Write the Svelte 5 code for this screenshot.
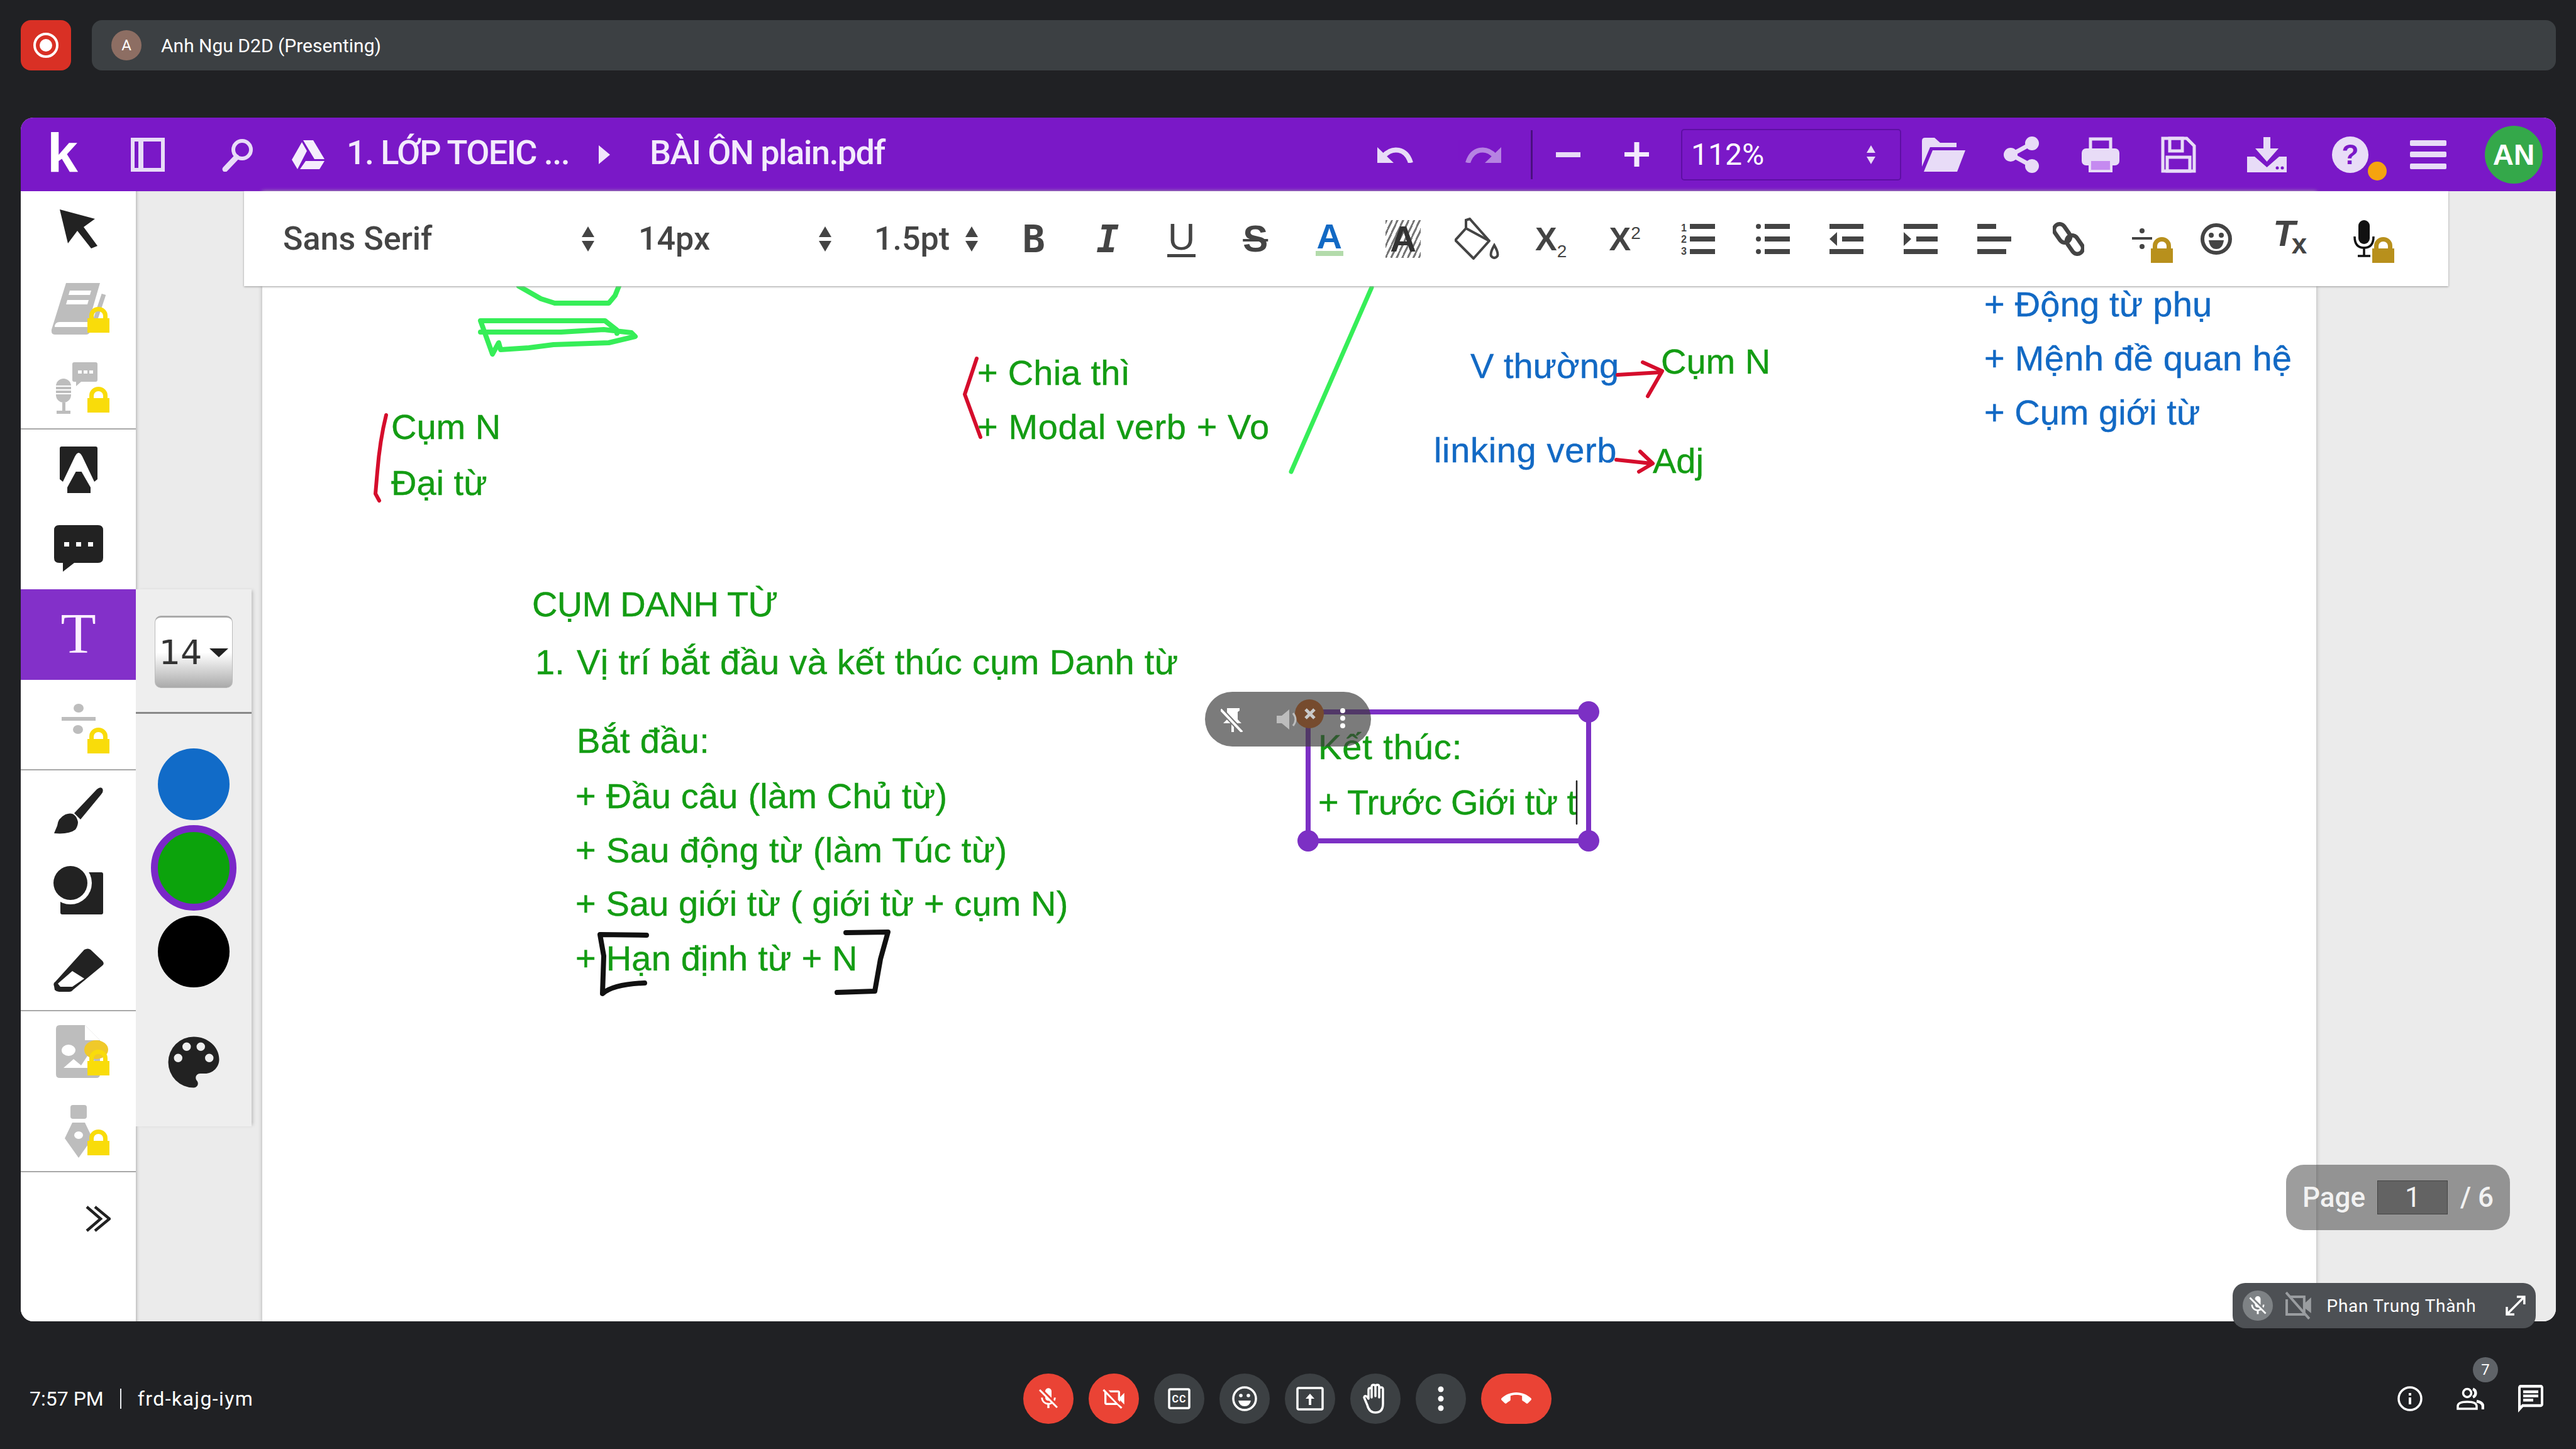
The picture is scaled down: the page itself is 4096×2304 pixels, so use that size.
<script>
  const G = '#139c13';
  const B = '#1269c4';
  const X = 417, Y = 304;
  const texts = [
    { x: 622, b: 698, t: 'Cụm N', c: G, s: 0 },
    { x: 622, b: 787, t: 'Đại từ', c: G, s: 0 },
    { x: 1554, b: 612, t: '+ Chia thì', c: G, s: 0.2 },
    { x: 1554, b: 698, t: '+ Modal verb + Vo', c: G, s: 0.6 },
    { x: 2338, b: 601, t: 'V thường', c: B, s: 0 },
    { x: 2641, b: 594, t: 'Cụm N', c: G, s: 0 },
    { x: 2280, b: 735, t: 'linking verb', c: B, s: 0.65 },
    { x: 2628, b: 752, t: 'Adj', c: G, s: 0 },
    { x: 3155, b: 503, t: '+ Động từ phụ', c: B, s: 0.2 },
    { x: 3155, b: 589, t: '+ Mệnh đề quan hệ', c: B, s: 0.3 },
    { x: 3155, b: 675, t: '+ Cụm giới từ', c: B, s: 0 },
    { x: 846, b: 980, t: 'CỤM DANH TỪ', c: G, s: -0.7 },
    { x: 851, b: 1072, t: '1.', c: G, s: 0 },
    { x: 917, b: 1072, t: 'Vị trí bắt đầu và kết thúc cụm Danh từ', c: G, s: 0.35 },
    { x: 917, b: 1197, t: 'Bắt đầu:', c: G, s: 0.3 },
    { x: 915, b: 1285, t: '+ Đầu câu (làm Chủ từ)', c: G, s: 0.2 },
    { x: 915, b: 1371, t: '+ Sau động từ (làm Túc từ)', c: G, s: 0.4 },
    { x: 915, b: 1456, t: '+ Sau giới từ ( giới từ + cụm N)', c: G, s: 0.1 },
    { x: 915, b: 1543, t: '+ Hạn định từ + N', c: G, s: 0.2 },
    { x: 2096, b: 1207, t: 'Kết thúc:', c: G, s: 0.9 },
    { x: 2096, b: 1295, t: '+ Trước Giới từ t', c: G, s: -0.6 }
  ];
  const swatches = ['blue', 'green', 'black'];
</script>

{#snippet lock(kind)}
  <svg class="lock {kind}" width="35" height="41" viewBox="0 0 35 41">
    <path d="M3 18 V14 a14.500 14 0 0 1 29 0 V18 h3 V41 H0 V18 Z M10 18 H25 V14 a7.500 7 0 0 0 -15 0 Z" />
  </svg>
{/snippet}

<div class="root">
  <header class="topbar">
    <div class="rec">
      <svg width="44" height="44" viewBox="0 0 44 44"><circle cx="22" cy="22" r="18" fill="none" stroke="#fff" stroke-width="4" /><circle cx="22" cy="22" r="10" fill="#fff" /></svg>
    </div>
    <div class="titlebar">
      <span class="ava">A</span>
      <span class="presenter">Anh Ngu D2D (Presenting)</span>
    </div>
  </header>

  <main class="panel">
    <div class="head">
      <span class="logo">k</span>
      <svg width="54" height="54" viewBox="0 0 54 54"><rect x="3" y="3" width="48" height="48" fill="none" stroke="#e8dcf7" stroke-width="6" /><rect x="12" y="3" width="8" height="48" fill="#e8dcf7" /></svg>
      <svg width="52" height="54" viewBox="0 0 52 54"><circle cx="33" cy="19" r="14" fill="none" stroke="#e8dcf7" stroke-width="6" /><path d="M24 31 L6 50" stroke="#e8dcf7" stroke-width="9" stroke-linecap="round" /></svg>
      <svg width="52" height="46" viewBox="0 0 52 46" fill="#f5eefc"><path d="M18 0 H34 L52 30 H36 Z" /><path d="M16 3 L24 17 L9 46 L0 31 Z" /><path d="M13 46 L22 33 H52 L44 46 Z" /></svg>
      <span class="crumb">1. LỚP TOEIC ...</span>
      <svg width="18" height="30" viewBox="0 0 18 30"><path d="M0 0 L18 15 L0 30 Z" fill="#f1e6fb" /></svg>
      <span class="crumb">BÀI ÔN plain.pdf</span>

      <svg width="58" height="26" viewBox="0 0 58 26"><path d="M0 1 V26 H26 Z" fill="#e8dcf7" /><path d="M10 15 C24 0 46 2 53 26" fill="none" stroke="#e8dcf7" stroke-width="8" /></svg>
      <svg class="dim" width="58" height="26" viewBox="0 0 58 26"><path d="M58 1 V26 H32 Z" fill="#e8dcf7" /><path d="M48 15 C34 0 12 2 5 26" fill="none" stroke="#e8dcf7" stroke-width="8" /></svg>
      <span class="sep"></span>
      <svg width="39" height="8" viewBox="0 0 39 8"><rect width="39" height="8" fill="#e8dcf7" /></svg>
      <svg width="39" height="39" viewBox="0 0 39 39"><path d="M0 16 H15.500 V0 H23.500 V16 H39 V23 H23.500 V39 H15.500 V23 H0 Z" fill="#f3ebfc" /></svg>
      <div class="zoombox">
        <span>112%</span>
        <svg width="16" height="30" viewBox="0 0 16 30"><path d="M8 0 L15 12 H1 Z M1 18 H15 L8 30 Z" fill="#e8dcf7" /></svg>
      </div>
      <svg width="69" height="54" viewBox="0 0 69 54" fill="#e8dcf7"><path d="M0 5 Q0 0 5 0 H20 L29 8 H55 V15 H13 L0 46 Z" /><path d="M17 20 H69 L56 54 H3 Z" /></svg>
      <svg width="56" height="58" viewBox="0 0 56 58"><path d="M45 11 L12 29 L45 47" fill="none" stroke="#e8dcf7" stroke-width="7" /><circle cx="45" cy="11" r="11" fill="#e8dcf7" /><circle cx="11" cy="29" r="11" fill="#e8dcf7" /><circle cx="45" cy="47" r="11" fill="#e8dcf7" /></svg>
      <svg width="60" height="56" viewBox="0 0 60 56"><rect x="14" y="3" width="32" height="20" fill="none" stroke="#e8dcf7" stroke-width="5" /><rect x="0" y="18" width="60" height="27" rx="7" fill="#e8dcf7" /><rect x="13" y="36" width="34" height="18" fill="#c58af0" stroke="#e8dcf7" stroke-width="4" /></svg>
      <svg width="56" height="58" viewBox="0 0 56 58"><path d="M3 3 H41 L53 15 V55 H3 Z" fill="none" stroke="#e8dcf7" stroke-width="5" /><rect x="14" y="3" width="20" height="20" fill="none" stroke="#e8dcf7" stroke-width="5" /><rect x="10" y="33" width="36" height="22" fill="none" stroke="#e8dcf7" stroke-width="5" /></svg>
      <svg width="63" height="56" viewBox="0 0 63 56"><path d="M26 0 H37 V18 H50 L31.500 39 L13 18 H26 Z" fill="#e8dcf7" /><path d="M0 31 H12 L31.500 48 L51 31 H63 V56 H0 Z" fill="#e8dcf7" /><circle cx="48" cy="49" r="2.500" fill="#7a18c7" /><circle cx="56" cy="49" r="2.500" fill="#7a18c7" /></svg>
      <div class="help">
        <svg width="58" height="58" viewBox="0 0 58 58"><circle cx="29" cy="29" r="29" fill="#e8dcf7" /><text x="29" y="44" text-anchor="middle" font-family="Liberation Sans" font-weight="700" font-size="44" fill="#7a18c7">?</text></svg>
        <span class="dot"></span>
      </div>
      <svg width="58" height="46" viewBox="0 0 58 46" fill="#e8dcf7"><rect width="58" height="9" rx="2" /><rect y="18" width="58" height="9" rx="2" /><rect y="37" width="58" height="9" rx="2" /></svg>
      <span class="me">AN</span>
    </div>

    <div class="body">
      <nav class="tools">
        <div class="grp first">
          <div class="tool"><svg width="60" height="62" viewBox="0 0 60 62"><path d="M0 0 L56 15 L38 28 L60 58 L50 62 L28 34 L13 54 Z" fill="#222" /></svg></div>
          <div class="tool">
            <svg width="88" height="82" viewBox="0 0 88 82" fill="#bdbdbd"><path d="M24 0 H78 L60 62 H14 Q6 62 6 70 H64 L62 78 Q60 82 56 82 H6 Q0 82 1 74 Z" /><path d="M30 12 H64 L62 19 H28 Z M26 27 H60 L58 34 H24 Z" fill="#fff" /><path d="M84 18 L66 72" stroke="#bdbdbd" stroke-width="7" /></svg>
            {@render lock('yl')}
          </div>
          <div class="tool">
            <svg width="76" height="84" viewBox="0 0 76 84" fill="#bdbdbd"><rect x="2" y="26" width="24" height="38" rx="12" /><path d="M2 38 H26 M2 44 H26 M2 50 H26" stroke="#fff" stroke-width="2" /><rect x="12" y="64" width="5" height="14" /><rect x="3" y="77" width="22" height="5" /><path d="M28 3 Q28 0 31 0 H65 Q68 0 68 3 V28 Q68 31 65 31 H42 L34 38 V31 H31 Q28 31 28 28 Z" /><path d="M37 13 h6 v5 h-6 z M46 13 h6 v5 h-6 z M55 13 h6 v5 h-6 z" fill="#fff" /></svg>
            {@render lock('yl')}
          </div>
        </div>
        <div class="grp noline">
          <div class="tool"><svg width="60" height="74" viewBox="0 0 60 74"><path d="M3 0 H57 Q60 0 60 3 V52 L55 56 L36 16 Q30 4 24 16 L5 56 L0 52 V3 Q0 0 3 0 Z" fill="#222" /><path d="M30 32 L49 65 V74 H12 V65 Z" fill="#222" /><path d="M24 40 H36 L30 24 Z" fill="#fff" /></svg></div>
          <div class="tool"><svg width="78" height="78" viewBox="0 0 78 78"><path d="M8 0 H70 Q78 0 78 8 V52 Q78 60 70 60 H32 L14 74 V60 H8 Q0 60 0 52 V8 Q0 0 8 0 Z" fill="#222" /><path d="M16 27 h8 v7 h-8 z M35 27 h8 v7 h-8 z M54 27 h8 v7 h-8 z" fill="#fff" /></svg></div>
        </div>
        <div class="tool active"><span class="tglyph">T</span></div>
        <div class="grp tall">
          <div class="tool">
            <svg width="56" height="76" viewBox="0 0 56 76" fill="#bdbdbd"><ellipse cx="28" cy="12" rx="8" ry="7" /><rect x="1" y="26" width="54" height="6" /><ellipse cx="27" cy="46" rx="8" ry="7" /></svg>
            {@render lock('yl')}
          </div>
        </div>
        <div class="grp">
          <div class="tool"><svg width="78" height="76" viewBox="0 0 78 76" fill="#222"><path d="M32 42 L68 4 Q74 -1 77 3 Q79 8 75 12 L42 52 Z" /><path d="M38 56 Q34 38 18 44 Q6 50 5 62 L0 74 Q24 76 34 68 Q38 62 38 56 Z" /></svg></div>
          <div class="tool"><svg width="80" height="78" viewBox="0 0 80 78"><rect x="11" y="10" width="68" height="67" rx="3" fill="#222" /><circle cx="27" cy="27" r="34" fill="#fff" /><circle cx="27" cy="27" r="27" fill="#222" /><rect x="0" y="54" width="11" height="24" fill="#fff" /></svg></div>
          <div class="tool"><svg width="82" height="70" viewBox="0 0 82 70"><path d="M50 2 Q56 -1 60 2 L79 20 Q83 25 78 28 L32 66 Q30 69 26 69 H10 Q6 69 3 66 L2 60 Q0 55 4 53 Z" fill="#222" /><path d="M31 36 L50 48 L31 61 H12 L8 56 Z" fill="#fff" /></svg></div>
        </div>
        <div class="grp">
          <div class="tool">
            <svg width="72" height="84" viewBox="0 0 72 84"><path d="M6 0 H46 L70 24 V78 Q70 84 64 84 H6 Q0 84 0 78 V6 Q0 0 6 0 Z" fill="#bdbdbd" /><path d="M46 0 L70 24 H46 Z" fill="#fff" /><ellipse cx="20" cy="40" rx="11" ry="9" fill="#fff" /><path d="M12 68 L28 54 L40 64 L52 46 L70 68 Z" fill="#fff" /></svg>
            <span class="blob"></span>
            {@render lock('yl')}
          </div>
          <div class="tool">
            <svg width="44" height="84" viewBox="0 0 44 84" fill="#bdbdbd"><rect x="9" y="0" width="26" height="22" rx="4" /><path d="M12 28 H32 L44 53 L22 84 L0 53 Z" /><ellipse cx="22" cy="48" rx="7" ry="6" fill="#fff" /></svg>
            {@render lock('yl')}
          </div>
        </div>
        <div class="tool more"><svg width="40" height="42" viewBox="0 0 40 42" fill="none" stroke="#222" stroke-width="4.500"><path d="M2 2 L24 21 L2 40" /><path d="M15 2 L38 21 L15 40" /></svg></div>
      </nav>

      <div class="gutter"></div>

      <div class="page">
        {#each texts as item}
          <span class="ink" style="left:{item.x - X}px;top:{item.b - 47 - Y}px;color:{item.c};letter-spacing:{item.s}px">{item.t}</span>
        {/each}
        <svg class="sketch" width="3266" height="1797" viewBox="417 304 3266 1797" fill="none" stroke-linecap="round" stroke-linejoin="round">
          <g stroke="#36ee58" stroke-width="8">
            <path d="M825 455 L860 475 L882 482 L968 482 L978 470 L984 455" />
            <path d="M764 510 L962 510 L981 525 L981 530 M764 528 L892 528 L960 524 L1004 529 L1010 535 L968 545 L880 548 L841 553 L796 556 L793 545 L783 563 L764 510" />
            <path d="M2181 457 L2053 750" stroke-width="7" />
          </g>
          <g stroke="#d50d2c" stroke-width="6">
            <path d="M614 660 Q604 700 600 750 L597 785 L603 796" />
            <path d="M1553 570 L1534 627 L1559 695" />
            <path d="M2572 596 L2640 592 M2612 576 L2643 590 L2620 630" />
            <path d="M2570 731 L2626 737 M2608 718 L2628 737 L2606 750" />
          </g>
          <g stroke="#111" stroke-width="8">
            <path d="M1028 1487 L954 1486 L960 1520 L958 1580 Q975 1565 1025 1563" />
            <path d="M1345 1483 L1412 1482 L1400 1525 L1391 1576 L1331 1578" />
          </g>
          <g stroke="#7c30c4" stroke-width="8"><rect x="2080" y="1132" width="446" height="205" /></g>
          <g fill="#7c30c4"><circle cx="2526" cy="1132" r="17" /><circle cx="2080" cy="1337" r="17" /><circle cx="2526" cy="1337" r="17" /><circle cx="2082" cy="1135" r="23" fill="#ee6a10" /></g>
          <path d="M2507 1242 V1310" stroke="#222" stroke-width="2.500" />
        </svg>
      </div>

      <div class="rgutter"></div>

      <div class="format">
        <span class="fsel">Sans Serif</span>
        <svg width="24" height="40" viewBox="0 0 24 40"><path d="M12 0 L22 17 H2 Z M2 23 H22 L12 40 Z" fill="#444" /></svg>
        <span class="fsel">14px</span>
        <svg width="24" height="40" viewBox="0 0 24 40"><path d="M12 0 L22 17 H2 Z M2 23 H22 L12 40 Z" fill="#444" /></svg>
        <span class="fsel">1.5pt</span>
        <svg width="24" height="40" viewBox="0 0 24 40"><path d="M12 0 L22 17 H2 Z M2 23 H22 L12 40 Z" fill="#444" /></svg>

        <span class="fi"><span class="g mono">B</span></span>
        <span class="fi"><span class="g mono it">I</span></span>
        <span class="fi"><span class="g u">U</span></span>
        <span class="fi"><span class="g s">S</span></span>
        <span class="fi"><span class="g ablue">A</span></span>
        <span class="fi"><span class="g hatch">A</span></span>
        <span class="fi"><svg width="72" height="68" viewBox="0 0 72 68" fill="none" stroke="#444" stroke-width="4"><path d="M18 17 L1 36 L30 65 L55 37 Z" stroke-linejoin="round" /><path d="M18 17 V4 L24 2 L55 37" /><path d="M63 44 Q56 56 58 61 Q63 67 68 61 Q70 56 63 44 Z" /></svg></span>
        <span class="fi"><span class="g xs">X<sub>2</sub></span></span>
        <span class="fi"><span class="g xs">X<sup>2</sup></span></span>
        <span class="fi"><svg width="56" height="54" viewBox="0 0 56 54"><path d="M14 7 H54 M14 27 H54 M14 47 H54" stroke="#444" stroke-width="8" /><text x="0" y="15" font-size="16" font-family="Liberation Sans" font-weight="700" fill="#444">1</text><text x="0" y="33" font-size="16" font-family="Liberation Sans" font-weight="700" fill="#444">2</text><text x="0" y="52" font-size="16" font-family="Liberation Sans" font-weight="700" fill="#444">3</text></svg></span>
        <span class="fi"><svg width="54" height="50" viewBox="0 0 54 50" fill="#444"><path d="M14 5 H54 M14 25 H54 M14 45 H54" stroke="#444" stroke-width="8" /><circle cx="4" cy="5" r="4" /><circle cx="4" cy="25" r="4" /><circle cx="4" cy="45" r="4" /></svg></span>
        <span class="fi"><svg width="54" height="50" viewBox="0 0 54 50" fill="#444"><path d="M0 5 H54 M20 25 H54 M0 45 H54" stroke="#444" stroke-width="8" /><path d="M12 14 V36 L0 25 Z" /></svg></span>
        <span class="fi"><svg width="54" height="50" viewBox="0 0 54 50" fill="#444"><path d="M0 5 H54 M20 25 H54 M0 45 H54" stroke="#444" stroke-width="8" /><path d="M0 14 V36 L12 25 Z" /></svg></span>
        <span class="fi"><svg width="54" height="50" viewBox="0 0 54 50"><path d="M0 5 H30 M0 25 H54 M0 45 H46" stroke="#444" stroke-width="8" /></svg></span>
        <span class="fi"><svg width="50" height="54" viewBox="0 0 50 54" fill="none" stroke="#444" stroke-width="6.500"><rect x="6" y="2" width="18" height="32" rx="9" transform="rotate(-35 15 18)" /><rect x="26" y="20" width="18" height="32" rx="9" transform="rotate(-35 35 36)" /></svg></span>
        <span class="fi">
          <svg width="32" height="36" viewBox="0 0 32 36" fill="#444"><circle cx="16" cy="5" r="4" /><rect y="15" width="32" height="4" /><circle cx="16" cy="30" r="4" /></svg>
          {@render lock('dk')}
        </span>
        <span class="fi"><svg width="50" height="50" viewBox="0 0 50 50"><circle cx="25" cy="25" r="22" fill="none" stroke="#444" stroke-width="6" /><circle cx="17" cy="19" r="4" fill="#444" /><circle cx="33" cy="19" r="4" fill="#444" /><path d="M13 27 H37 Q35 41 25 41 Q15 41 13 27 Z" fill="#444" /></svg></span>
        <span class="fi"><span class="g tx">T<small>x</small></span></span>
        <span class="fi">
          <svg width="36" height="60" viewBox="0 0 36 60"><rect x="9" y="0" width="18" height="38" rx="9" fill="#111" /><path d="M3 26 Q3 44 18 44 Q33 44 33 26" fill="none" stroke="#111" stroke-width="3.500" /><path d="M18 44 V56 M8 57 H28" stroke="#111" stroke-width="3.500" /></svg>
          {@render lock('dk')}
        </span>
      </div>

      <aside class="sub">
        <div class="size"><span>14</span><i></i></div>
        <div class="rule"></div>
        <div class="swatches">
          {#each swatches as s}
            <div class="sw"><span class="disc {s}"></span></div>
          {/each}
        </div>
        <svg class="palette" width="108" height="108" viewBox="0 0 24 24"><path fill="#222" d="M12 3a9 9 0 0 0 0 18c.83 0 1.500-.67 1.500-1.500 0-.39-.15-.74-.39-1.010-.23-.26-.38-.61-.38-.99 0-.83.67-1.500 1.500-1.500H16c2.760 0 5-2.240 5-5 0-4.420-4.030-8-9-8zm-5.500 9a1.500 1.500 0 1 1 0-3 1.500 1.500 0 0 1 0 3zm3-4a1.500 1.500 0 1 1 0-3 1.500 1.500 0 0 1 0 3zm5 0a1.500 1.500 0 1 1 0-3 1.500 1.500 0 0 1 0 3zm3 4a1.500 1.500 0 1 1 0-3 1.500 1.500 0 0 1 0 3z" /></svg>
      </aside>

      <div class="pill">
        <svg width="36" height="38" viewBox="0 0 36 38"><path d="M10 0 H30 V4 L27 6 V18 L33 24 H21 V38 H17 V24 H4 L10 18 Z" fill="#fff" /><path d="M0 2 L34 38" stroke="#787878" stroke-width="8" /><path d="M0 2 L34 38" stroke="#fff" stroke-width="4" /></svg>
        <svg class="spk" width="38" height="36" viewBox="0 0 38 36"><path d="M0 12 H8 L20 2 V34 L8 24 H0 Z" fill="#bdbdbd" /><path d="M26 8 Q34 18 26 28" fill="none" stroke="#bdbdbd" stroke-width="3" /></svg>
        <div class="closeb"><svg width="18" height="18" viewBox="0 0 18 18"><path d="M2 2 L16 16 M16 2 L2 16" stroke="#c9c9c9" stroke-width="5" /></svg></div>
        <div class="vdots"><i></i><i></i><i></i></div>
      </div>

      <div class="pager">
        <span>Page</span>
        <span class="pnum">1</span>
        <span>/ 6</span>
      </div>
    </div>
  </main>

  <div class="tile">
    <span class="tmic"><svg width="36" height="36" viewBox="0 0 24 24"><path fill="#fff" d="M19 11h-1.700c0 .74-.16 1.430-.43 2.050l1.230 1.230c.56-.98.9-2.090.9-3.280zm-4.020.17c0-.06.02-.11.02-.17V5c0-1.660-1.340-3-3-3S9 3.340 9 5v.18l5.980 5.990zM4.270 3L3 4.270l6.010 6.010V11c0 1.660 1.330 3 2.990 3 .22 0 .44-.03.65-.08l1.660 1.660c-.71.33-1.500.52-2.310.52-2.760 0-5.300-2.100-5.300-5.100H5c0 3.410 2.720 6.230 6 6.720V21h2v-3.280c.91-.13 1.770-.45 2.540-.9L19.730 21 21 19.730 4.270 3z" /></svg></span>
    <svg class="tcam" width="42" height="44" viewBox="0 0 42 44" fill="none" stroke="#9a9da0" stroke-width="4"><path d="M2 12 V36 H30 V8 H8" /><path d="M31 18 L41 9 V34 L31 26 Z" fill="#9a9da0" stroke="none" /><path d="M1 1 L38 43" /></svg>
    <span class="tname">Phan Trung Thành</span>
    <svg width="32" height="32" viewBox="0 0 32 32" fill="none" stroke="#fff" stroke-width="3.500"><path d="M2 30 L30 2 M18 2 H30 V14 M2 18 V30 H14" /></svg>
  </div>

  <footer class="foot">
    <div class="meet"><span>7:57 PM</span><b></b><span class="code">frd-kajg-iym</span></div>
    <div class="ctrls">
      <button class="c red"><svg width="40" height="40" viewBox="0 0 24 24"><path fill="#fff" d="M19 11h-1.700c0 .74-.16 1.430-.43 2.050l1.230 1.230c.56-.98.9-2.090.9-3.280zm-4.020.17c0-.06.02-.11.02-.17V5c0-1.660-1.340-3-3-3S9 3.340 9 5v.18l5.980 5.990zM4.270 3L3 4.270l6.010 6.010V11c0 1.660 1.330 3 2.990 3 .22 0 .44-.03.65-.08l1.660 1.660c-.71.33-1.500.52-2.310.52-2.760 0-5.300-2.100-5.300-5.100H5c0 3.410 2.720 6.230 6 6.720V21h2v-3.280c.91-.13 1.770-.45 2.540-.9L19.730 21 21 19.730 4.270 3z" /></svg></button>
      <button class="c red"><svg width="40" height="40" viewBox="0 0 24 24"><path fill="#fff" d="M18 10.480V6c0-1.100-.9-2-2-2H6.830l2 2H16v7.170l2 2v-1.650l4 3.980v-11l-4 3.980zM16 16.830L2.810 2.810 1.390 4.220 3 5.830V16c0 1.100.9 2 2 2h10.170l3.610 3.610 1.410-1.410L16 16.830zM5 16V7.830L13.170 16H5z" /></svg></button>
      <button class="c"><svg width="40" height="40" viewBox="0 0 40 40"><rect x="4" y="5" width="32" height="30" rx="2" fill="none" stroke="#fff" stroke-width="3.500" /><text x="20" y="26" text-anchor="middle" font-family="Roboto" font-weight="700" font-size="16" letter-spacing="1" fill="#fff">CC</text></svg></button>
      <button class="c"><svg width="42" height="42" viewBox="0 0 42 42"><circle cx="21" cy="21" r="18" fill="none" stroke="#fff" stroke-width="3.500" /><circle cx="15" cy="16" r="2.800" fill="#fff" /><circle cx="27" cy="16" r="2.800" fill="#fff" /><path d="M11 24 H31 Q29 33 21 33 Q13 33 11 24 Z" fill="#fff" /></svg></button>
      <button class="c"><svg width="44" height="40" viewBox="0 0 44 40"><rect x="2" y="3" width="40" height="34" rx="2" fill="none" stroke="#fff" stroke-width="3.500" /><path d="M22 12 L29 20 H24 V30 H20 V20 H15 Z" fill="#fff" /></svg></button>
      <button class="c"><svg width="40" height="48" viewBox="0 0 40 48" fill="none" stroke="#fff" stroke-width="3.500" stroke-linecap="round" stroke-linejoin="round"><path d="M9 24 V10 Q9 7 12 7 Q14 7 14 10 V22 M14 20 V5 Q14 2 17 2 Q20 2 20 5 V20 M20 20 V5 Q20 2 23 2 Q26 2 26 5 V22 M26 22 V9 Q26 6 29 6 Q32 6 32 9 V32 Q32 46 20 46 Q10 46 7 34 L2 22 Q3 18 7 21 L9 24" /></svg></button>
      <button class="c"><svg width="10" height="40" viewBox="0 0 10 40" fill="#fff"><circle cx="5" cy="5" r="4.500" /><circle cx="5" cy="20" r="4.500" /><circle cx="5" cy="35" r="4.500" /></svg></button>
      <button class="c end"><svg width="48" height="48" viewBox="0 0 24 24"><path fill="#fff" d="M12 9c-1.600 0-3.150.25-4.600.72v3.100c0 .39-.23.74-.56.9-.98.49-1.870 1.120-2.660 1.850-.18.18-.43.28-.7.28-.28 0-.53-.11-.71-.29L.29 13.080c-.18-.17-.29-.42-.29-.7 0-.28.11-.53.29-.71C3.340 8.780 7.460 7 12 7s8.660 1.780 11.710 4.670c.18.18.29.43.29.71 0 .28-.11.53-.29.71l-2.480 2.480c-.18.18-.43.29-.71.29-.27 0-.52-.11-.7-.28-.79-.74-1.690-1.360-2.670-1.850-.33-.16-.56-.5-.56-.9v-3.100C15.150 9.250 13.600 9 12 9z" /></svg></button>
    </div>
    <div class="right">
      <svg width="40" height="40" viewBox="0 0 40 40"><circle cx="20" cy="20" r="18" fill="none" stroke="#fff" stroke-width="3.500" /><rect x="18" y="18" width="4" height="11" fill="#fff" /><rect x="18" y="11" width="4" height="4" fill="#fff" /></svg>
      <div class="people">
        <svg width="44" height="36" viewBox="0 0 44 36" fill="none" stroke="#fff" stroke-width="3.500"><circle cx="17" cy="9" r="6.500" /><path d="M2 34 V30 Q2 23 17 23 Q32 23 32 30 V34 Z" /><path d="M26 2.500 A7 7 0 0 1 26 15.500" stroke-width="4.500" /><path d="M32 22 Q42 24 42 30 V35" stroke-width="4.500" /></svg>
        <span class="badge">7</span>
      </div>
      <svg width="40" height="44" viewBox="2 2 20 20" preserveAspectRatio="none"><path fill="#fff" d="M20 2H4c-1.100 0-2 .9-2 2v18l4-4h14c1.100 0 2-.9 2-2V4c0-1.100-.9-2-2-2zm0 14H5.170L4 17.170V4h16v12zM6 12h8v2H6zM6 9h12v2H6zM6 6h12v2H6z" /></svg>
    </div>
  </footer>
</div>

<style>
  :global(body) { margin: 0; background: #202124; }
  .root { position: relative; width: 4096px; height: 2304px; background: #202124; font-family: Roboto, sans-serif; overflow: hidden; }

  .topbar { display: flex; gap: 33px; height: 80px; padding: 32px 32px 0 33px; }
  .rec { width: 80px; height: 80px; background: #d93025; border-radius: 16px; display: flex; align-items: center; justify-content: center; }
  .titlebar { flex: 1; display: flex; align-items: center; background: #3c4043; border-radius: 16px; padding-left: 31px; gap: 31px; color: #fff; }
  .ava { width: 48px; height: 48px; border-radius: 50%; background: #8d6e63; color: #fff; display: flex; align-items: center; justify-content: center; font-size: 24px; }
  .presenter { font-size: 30px; font-weight: 400; }

  .panel { width: 4031px; height: 1914px; margin: 75px 0 0 33px; border-radius: 20px; overflow: hidden; background: #ebebeb; display: flex; flex-direction: column; }

  .head { height: 117px; background: #7a18c7; display: grid; align-items: center; justify-items: start; padding-left: 49px;
    grid-template-columns: 126px 144px 112px 87px 401px 81px 1157px 139px 105px 40px 109px 90px 383px 130px 124px 126px 137px 135px 124px 120px 91px; }
  .logo { font: 700 88px/1 "Liberation Sans", sans-serif; color: #fff; margin: -6px 0 0 -7px; }
  .crumb { font-size: 54px; font-weight: 500; letter-spacing: -1.6px; color: #f3ebfc; white-space: nowrap; margin-top: -6px; }
  .dim { opacity: .55; }
  .sep { width: 3px; height: 78px; background: #4a1080; }
  .zoombox { width: 350px; height: 82px; box-sizing: border-box; border: 2px solid #5d0fa3; border-radius: 5px; display: flex; align-items: center; justify-content: space-between; padding: 0 38px 0 14px; color: #fff; font-size: 48px; }
  .help { position: relative; display: flex; }
  .dot { position: absolute; left: 57px; top: 40px; width: 30px; height: 30px; border-radius: 50%; background: #f5a30f; }
  .me { width: 92px; height: 92px; border-radius: 50%; background: #34a84a; color: #fff; font: 700 46px/92px "Liberation Sans", sans-serif; text-align: center; margin-left: -1px; }

  .body { flex: 1; display: flex; position: relative; min-height: 0; }
  .tools { width: 183px; flex: none; background: #fff; display: flex; flex-direction: column; }
  .grp { border-bottom: 2px solid #a8a8a8; flex: none; }
  .grp.first { margin-top: -4px; }
  .grp.noline { border: 0; }
  .grp.tall .tool { height: 142px; }
  .tool { position: relative; height: 127px; display: flex; align-items: center; justify-content: center; }
  .tool.active { height: 144px; flex: none; background: #8330c9; }
  .tglyph { font: 400 92px/1 "Liberation Serif", serif; color: #fbeeff; margin-top: -4px; }
  .tool.more { height: 148px; justify-content: flex-end; padding-right: 40px; }
  .blob { position: absolute; left: 101px; top: 46px; width: 38px; height: 30px; border-radius: 50%; background: #f0c92a; }

  .lock { position: absolute; left: 106px; bottom: 25px; }
  .yl { fill: #f9dc0a; }
  .dk { fill: #b8901c; left: 72px; bottom: 37px; }

  .gutter { width: 201px; flex: none; background: #ebebeb; box-shadow: inset 4px 0 5px -3px #aaa; }
  .page { width: 3266px; flex: none; background: #fff; position: relative; overflow: hidden; box-shadow: 0 0 6px #aaa; }
  .rgutter { flex: 1; background: #ebebeb; }
  .ink { position: absolute; font: 400 56px/1 "Liberation Sans", sans-serif; white-space: pre; -webkit-text-stroke: .4px currentColor; }
  .sketch { position: absolute; left: 0; top: 0; }

  .format { position: absolute; left: 355px; top: 0; width: 3505px; height: 151px; box-sizing: border-box; padding-left: 62px; background: #fff; box-shadow: 0 1px 3px #999; display: grid; align-items: center; justify-items: start;
    grid-template-columns: 473px 92px 285px 90px 143px 52px repeat(19, 117.5px); }
  .fsel { font-size: 52px; font-weight: 500; color: #444; white-space: nowrap; }
  .fi { position: relative; width: 117.5px; height: 151px; display: flex; align-items: center; justify-content: center; }
  .g { font: 400 60px/1 "Liberation Sans", sans-serif; color: #444; }
  .mono { font: 700 60px/1 "DejaVu Sans Mono", monospace; }
  .it { font-style: italic; }
  .u { border-bottom: 5px solid #444; padding: 0 1px; line-height: 54px; }
  .s { text-decoration: line-through; text-decoration-thickness: 4px; font-weight: 700; }
  .ablue { font-weight: 700; color: #1269c4; border-bottom: 8px solid #b3dbab; line-height: 46px; padding: 0 2px; font-size: 56px; }
  .hatch { font-weight: 700; font-size: 58px; color: #333; width: 56px; height: 60px; text-align: center; line-height: 60px; background: repeating-linear-gradient(115deg, #777 0 3px, #fff 3px 8px); }
  .xs { font-weight: 700; font-size: 52px; }
  .xs sub, .xs sup { font-size: 28px; font-weight: 400; line-height: 0; }
  .tx { font-style: italic; font-weight: 700; font-size: 58px; position: relative; line-height: 48px; }
  .tx small { font-size: 44px; font-style: normal; font-weight: 700; vertical-align: -12px; margin-left: -6px; }

  .sub { position: absolute; left: 183px; top: 633px; width: 184px; height: 854px; background: #eee; box-shadow: 4px 0 5px -2px #bbb; display: flex; flex-direction: column; align-items: center; }
  .size { margin-top: 42px; width: 124px; height: 115px; flex: none; box-sizing: border-box; border-radius: 10px; background: linear-gradient(#fff 50%, #aaa); border: 1px solid #bbb; border-top: 3px solid #aaa; display: flex; align-items: center; justify-content: center; gap: 12px; color: #333; font: 400 54px/1 "DejaVu Sans", sans-serif; }
  .size i { width: 0; height: 0; border: 15px solid transparent; border-top: 14px solid #222; border-bottom: 0; }
  .rule { margin-top: 38px; width: 100%; height: 3px; flex: none; background: #888; }
  .swatches { margin-top: 45px; display: flex; flex-direction: column; }
  .sw { height: 133px; display: flex; align-items: center; justify-content: center; }
  .disc { width: 114px; height: 114px; border-radius: 50%; box-sizing: content-box; }
  .blue { background: #116bc8; }
  .green { background: #0ca30c; border: 11px solid #7a28c8; }
  .black { background: #000; }
  .palette { margin-top: 56px; flex: none; }

  .pill { position: absolute; left: 1883px; top: 796px; width: 264px; height: 87px; border-radius: 44px; background: rgba(60, 60, 60, .68); }
  .pill svg, .pill div { position: absolute; }
  .pill > svg:first-child { left: 25px; top: 26px; }
  .spk { left: 114px; top: 26px; }
  .closeb { left: 144px; top: 12px; width: 46px; height: 46px; display: flex; align-items: center; justify-content: center; }
  .vdots { left: 215px; top: 26px; display: flex; flex-direction: column; gap: 4px; }
  .vdots i { width: 8px; height: 8px; border-radius: 50%; background: #fff; }

  .pager { position: absolute; left: 3602px; top: 1548px; width: 356px; height: 104px; box-sizing: border-box; padding: 0 26px; border-radius: 28px; background: rgba(60, 60, 60, .5); display: flex; align-items: center; justify-content: space-between; color: #f2f2f2; font-size: 44px; font-weight: 500; }
  .pnum { width: 112px; height: 54px; box-sizing: border-box; background: #636363; border: 1.5px solid #444; text-align: center; line-height: 52px; font-weight: 400; }

  .tile { position: absolute; left: 3550px; top: 2040px; width: 482px; height: 72px; box-sizing: border-box; padding: 0 16px; background: #4d5054; border-radius: 20px; display: flex; align-items: center; color: #fff; }
  .tmic { width: 48px; height: 48px; border-radius: 50%; background: #7e8285; display: flex; align-items: center; justify-content: center; }
  .tcam { margin-left: 20px; }
  .tname { margin-left: 24px; font-size: 28px; font-weight: 400; letter-spacing: .7px; width: 286px; white-space: nowrap; }

  .foot { position: relative; height: 160px; margin-top: 43px; display: flex; align-items: center; color: #fff; }
  .meet { position: absolute; left: 47px; display: flex; align-items: center; gap: 26px; font-size: 32px; font-weight: 400; }
  .code { letter-spacing: 1.4px; }
  .meet b { width: 2px; height: 32px; background: #e8eaed; }
  .ctrls { position: absolute; left: 1627px; display: flex; gap: 24px; }
  .c { width: 80px; height: 80px; border: 0; padding: 0; border-radius: 40px; background: #3c4043; display: flex; align-items: center; justify-content: center; }
  .c.red { background: #ea4335; }
  .c.end { width: 112px; background: #ea4335; }
  .right { position: absolute; right: 52px; display: flex; align-items: center; gap: 54px; }
  .people { position: relative; display: flex; }
  .badge { position: absolute; left: 8px; top: -48px; margin-left: 18px; width: 40px; height: 40px; border-radius: 50%; background: #5f6368; font-size: 24px; line-height: 40px; text-align: center; }
</style>
